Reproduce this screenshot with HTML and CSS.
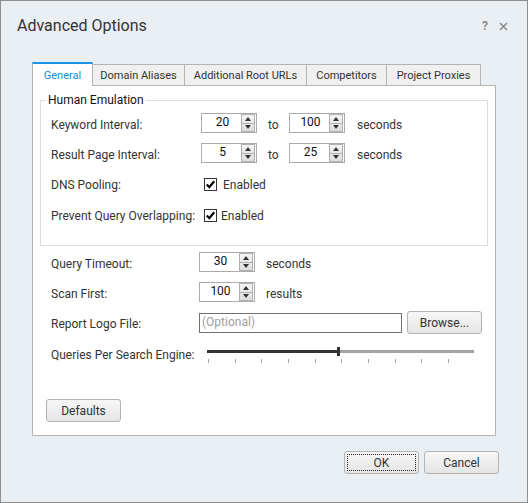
FILE: index.html
```html
<!DOCTYPE html>
<html>
<head>
<meta charset="utf-8">
<link rel="stylesheet" href="styles.css">
</head>
<body>
<div class="window">
  <div class="titlebar">
    <div class="title">Advanced Options</div>
    <div class="controls">
      <span class="help">?</span>
      <svg class="close" width="9" height="9" viewBox="0 0 9 9"><path d="M1 1 L8 8 M8 1 L1 8" stroke="#8c8c8c" stroke-width="1.6" fill="none"/></svg>
    </div>
  </div>
  <div class="tabs">
    <div class="tab active t-general">General</div>
    <div class="tab t-domain">Domain Aliases</div>
    <div class="tab t-root">Additional Root URLs</div>
    <div class="tab t-comp">Competitors</div>
    <div class="tab t-proxy">Project Proxies</div>
  </div>
  <div class="panel">
    <fieldset class="group">
      <legend>Human Emulation</legend>
      <div class="row">
        <span class="lbl">Keyword Interval:</span>
        <div class="spin"><span class="val">20</span><span class="arrows"><span class="up"></span><span class="down"></span></span></div>
        <span class="to">to</span>
        <div class="spin"><span class="val">100</span><span class="arrows"><span class="up"></span><span class="down"></span></span></div>
        <span class="unit">seconds</span>
      </div>
      <div class="row">
        <span class="lbl">Result Page Interval:</span>
        <div class="spin"><span class="val">5</span><span class="arrows"><span class="up"></span><span class="down"></span></span></div>
        <span class="to">to</span>
        <div class="spin"><span class="val">25</span><span class="arrows"><span class="up"></span><span class="down"></span></span></div>
        <span class="unit">seconds</span>
      </div>
      <div class="row check-row">
        <span class="lbl">DNS Pooling:</span>
        <span class="check"><svg width="11" height="11" viewBox="0 0 11 11"><path d="M1.8 5.6 L4.3 8.2 L9.2 2.2" stroke="#000" stroke-width="2.2" fill="none"/></svg></span>
        <span class="check-text">Enabled</span>
      </div>
      <div class="row check-row">
        <span class="lbl">Prevent Query Overlapping:</span>
        <span class="check"><svg width="11" height="11" viewBox="0 0 11 11"><path d="M1.8 5.6 L4.3 8.2 L9.2 2.2" stroke="#000" stroke-width="2.2" fill="none"/></svg></span>
        <span class="check-text tight">Enabled</span>
      </div>
    </fieldset>
    <div class="form">
      <div class="row">
        <span class="lbl lbl2">Query Timeout:</span>
        <div class="spin"><span class="val">30</span><span class="arrows"><span class="up"></span><span class="down"></span></span></div>
        <span class="unit2">seconds</span>
      </div>
      <div class="row">
        <span class="lbl lbl2">Scan First:</span>
        <div class="spin"><span class="val">100</span><span class="arrows"><span class="up"></span><span class="down"></span></span></div>
        <span class="unit2">results</span>
      </div>
      <div class="row file-row">
        <span class="lbl lbl2">Report Logo File:</span>
        <div class="file-input">(Optional)</div>
        <button class="btn browse">Browse...</button>
      </div>
      <div class="row slider-row">
        <span class="lbl lbl2">Queries Per Search Engine:</span>
        <div class="slider">
          <div class="track">
            <span class="fill"></span><span class="thumb"></span><span class="rest"></span>
          </div>
          <div class="ticks">
            <i></i><i></i><i></i><i></i><i></i><i></i><i></i><i></i><i></i><i></i>
          </div>
        </div>
      </div>
    </div>
    <button class="btn defaults">Defaults</button>
  </div>
  <div class="footer">
    <button class="btn ok"><span class="focus">OK</span></button>
    <button class="btn">Cancel</button>
  </div>
</div>
</body>
</html>
```
FILE: styles.css
```css
body {
  margin: 0;
  font-family: Roboto, "Noto Sans", sans-serif;
  font-size: 12px;
  color: #333;
}

.window {
  width: 528px;
  height: 503px;
  box-sizing: border-box;
  border: 1px solid #8e8e8e;
  background: #eaeff4;
  display: flex;
  flex-direction: column;
  white-space: nowrap;
}

.titlebar {
  height: 61px;
  box-sizing: border-box;
  padding: 13px 19px 0 16px;
  display: flex;
  justify-content: space-between;
  align-items: flex-start;
}

.title {
  font-size: 16px;
  line-height: 24px;
  color: #333;
}

.controls {
  display: flex;
  align-items: center;
  gap: 11px;
  height: 24px;
  padding-top: 0;
}

.help {
  font-size: 12px;
  font-weight: bold;
  color: #8c8c8c;
  line-height: 12px;
}

.close {
  display: block;
}

.tabs {
  display: flex;
  align-items: flex-end;
  height: 24px;
  margin-left: 31px;
  font-size: 11px;
}

.tab {
  height: 22px;
  box-sizing: border-box;
  border: 1px solid #b4b4b4;
  border-bottom: none;
  background: #f0f0f0;
  display: flex;
  align-items: center;
  justify-content: center;
  margin-left: -1px;
  color: #333;
}

.tab.active {
  height: 24px;
  margin-left: 0;
  border-top: 2px solid #1e93e8;
  background: #fff;
  color: #1a88d6;
  position: relative;
  z-index: 1;
}

.t-general { width: 61px; }
.t-domain { width: 93px; }
.t-root { width: 123px; }
.t-comp { width: 81px; }
.t-proxy { width: 95px; }

.panel {
  margin: -1px 31px 0 31px;
  height: 351px;
  box-sizing: border-box;
  border: 1px solid #b4b4b4;
  background: #fff;
  padding: 0 7px;
  display: flex;
  flex-direction: column;
  align-items: flex-start;
}

.group {
  margin: 6px 0 0 0;
  padding: 5px 0 0 10px;
  width: 448px;
  height: 154px;
  box-sizing: border-box;
  border: 1px solid #dcdcdc;
  min-width: 0;
  display: flex;
  flex-direction: column;
  gap: 10px;
}

.group legend {
  padding: 0 2px;
  margin-left: -5px;
  line-height: 16px;
  color: #111;
}

.row {
  display: flex;
  align-items: center;
  height: 20px;
}

.row > span:not(.check) {
  align-self: stretch;
  line-height: 24px;
}

.check-row {
  margin-top: 1px;
}

.check-row > span:not(.check) {
  line-height: 22px;
}

.lbl {
  width: 150px;
  flex: none;
  color: #333;
}

.lbl2 {
  width: 148px;
}

.spin {
  width: 56px;
  height: 20px;
  box-sizing: border-box;
  border: 1px solid #ababab;
  background: #fff;
  display: flex;
  flex: none;
}

.spin .val {
  flex: 1;
  text-align: center;
  line-height: 17px;
  color: #111;
  padding-left: 2px;
}

.arrows {
  width: 14px;
  margin: 0 1px 0 0;
  display: flex;
  flex-direction: column;
  box-sizing: border-box;
  border: 1px solid #b0b0b0;
  background: linear-gradient(#f4f4f4, #dedede);
}

.arrows span {
  flex: 1;
  display: flex;
  align-items: center;
  justify-content: center;
}

.arrows .up {
  border-bottom: 1px solid #b0b0b0;
}

.arrows .up::after {
  content: "";
  border-left: 3px solid transparent;
  border-right: 3px solid transparent;
  border-bottom: 4px solid #333;
}

.arrows .down::after {
  content: "";
  border-left: 3px solid transparent;
  border-right: 3px solid transparent;
  border-top: 4px solid #333;
}

.to {
  width: 21px;
  padding-left: 11px;
  flex: none;
}

.unit {
  margin-left: 12px;
}

.unit2 {
  margin-left: 11px;
}

.check {
  width: 13px;
  height: 13px;
  box-sizing: border-box;
  border: 1px solid #333;
  background: #fff;
  margin-left: 3px;
  display: flex;
  align-items: center;
  justify-content: center;
}

.check svg {
  display: block;
}

.check-text {
  margin-left: 6px;
}

.check-text.tight {
  margin-left: 4px;
}

.form {
  margin-top: 6px;
  padding-left: 11px;
  display: flex;
  flex-direction: column;
  gap: 10px;
}

.file-row {
  height: 23px;
  margin-top: -1px;
}

.row.file-row > span {
  line-height: 26px;
}

.file-input {
  width: 203px;
  height: 20px;
  box-sizing: border-box;
  border: 1px solid #707070;
  background: #fff;
  color: #a0a0a0;
  line-height: 17px;
  padding-left: 2px;
}

.btn {
  width: 75px;
  height: 23px;
  box-sizing: border-box;
  border: 1px solid #b3b3b3;
  border-radius: 3px;
  background: linear-gradient(#f7f7f7, #e5e5e5);
  font-family: Roboto, "Noto Sans", sans-serif;
  font-size: 12px;
  color: #333;
  padding: 0;
  display: flex;
  align-items: center;
  justify-content: center;
}

.browse {
  margin-left: 5px;
}

.slider-row {
  align-items: flex-start;
}

.row.slider-row > span {
  line-height: 22px;
}

.slider {
  margin-left: 8px;
  width: 267px;
  display: flex;
  flex-direction: column;
}

.track {
  margin-top: 3px;
  height: 9px;
  display: flex;
  align-items: center;
}

.fill {
  width: 130px;
  height: 3px;
  background: #333;
}

.thumb {
  width: 3px;
  height: 9px;
  background: #333;
}

.rest {
  flex: 1;
  height: 3px;
  background: #a3a3a3;
}

.ticks {
  margin: 3px 0 0 1px;
  width: 241px;
  height: 4px;
  display: flex;
  justify-content: space-between;
}

.ticks i {
  width: 1px;
  height: 4px;
  background: #a8a8a8;
}

.defaults {
  margin: 35px 0 0 6px;
}

.footer {
  margin-top: 15px;
  padding-right: 28px;
  display: flex;
  justify-content: flex-end;
  gap: 5px;
}

.ok .focus {
  width: 69px;
  height: 17px;
  box-sizing: border-box;
  border: 1px dotted #222;
  display: flex;
  align-items: center;
  justify-content: center;
}
```
